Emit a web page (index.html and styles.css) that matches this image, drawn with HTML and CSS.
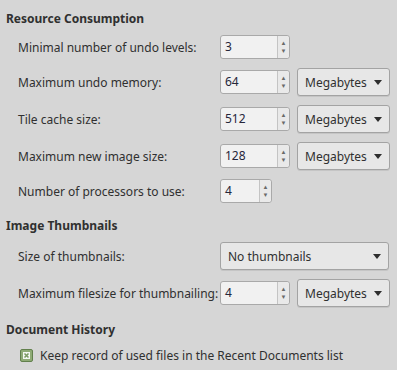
FILE: index.html
```html
<!DOCTYPE html>
<html lang="en">
<head>
    <meta charset="UTF-8">
    <title>Environment Settings</title>
    <link rel="stylesheet" href="styles.css">
</head>
<body>
    <div class="panel">
        <div class="section-title">Resource Consumption</div>
        <div class="row row-first short">
            <label>Minimal number of undo levels:</label>
            <div class="spin"><span class="value">3</span><span class="arrows"><i>&#9650;</i><i>&#9660;</i></span></div>
        </div>
        <div class="row">
            <label>Maximum undo memory:</label>
            <div class="spin"><span class="value">64</span><span class="arrows"><i>&#9650;</i><i>&#9660;</i></span></div>
            <div class="combo"><span>Megabytes</span><svg class="caret" width="8" height="5" viewBox="0 0 8 5"><path d="M0 0 H8 L4 5 Z"/></svg></div>
        </div>
        <div class="row">
            <label>Tile cache size:</label>
            <div class="spin"><span class="value">512</span><span class="arrows"><i>&#9650;</i><i>&#9660;</i></span></div>
            <div class="combo"><span>Megabytes</span><svg class="caret" width="8" height="5" viewBox="0 0 8 5"><path d="M0 0 H8 L4 5 Z"/></svg></div>
        </div>
        <div class="row">
            <label>Maximum new image size:</label>
            <div class="spin"><span class="value">128</span><span class="arrows"><i>&#9650;</i><i>&#9660;</i></span></div>
            <div class="combo"><span>Megabytes</span><svg class="caret" width="8" height="5" viewBox="0 0 8 5"><path d="M0 0 H8 L4 5 Z"/></svg></div>
        </div>
        <div class="row short">
            <label>Number of processors to use:</label>
            <div class="spin spin-small"><span class="value">4</span><span class="arrows"><i>&#9650;</i><i>&#9660;</i></span></div>
        </div>

        <div class="section-title section-gap">Image Thumbnails</div>
        <div class="row row-first">
            <label>Size of thumbnails:</label>
            <div class="combo combo-wide"><span>No thumbnails</span><svg class="caret" width="8" height="5" viewBox="0 0 8 5"><path d="M0 0 H8 L4 5 Z"/></svg></div>
        </div>
        <div class="row">
            <label>Maximum filesize for thumbnailing:</label>
            <div class="spin"><span class="value">4</span><span class="arrows"><i>&#9650;</i><i>&#9660;</i></span></div>
            <div class="combo"><span>Megabytes</span><svg class="caret" width="8" height="5" viewBox="0 0 8 5"><path d="M0 0 H8 L4 5 Z"/></svg></div>
        </div>

        <div class="section-title section-gap">Document History</div>
        <div class="check-row">
            <svg class="check" width="13" height="13" viewBox="0 0 13 13">
                <rect x="0.5" y="0.5" width="12" height="12" rx="1.5" fill="#8fab76" stroke="#62804d"/>
                <rect x="3" y="3" width="7" height="7" fill="#f4f7f1"/>
                <path d="M4.5 4.5 L8.5 8.5 M8.5 4.5 L4.5 8.5" stroke="#7b9a63" stroke-width="1.6"/>
            </svg>
            <span>Keep record of used files in the Recent Documents list</span>
        </div>
    </div>
</body>
</html>
```

FILE: styles.css
```css
body {
    margin: 0;
    font-family: "Noto Sans", "Open Sans", sans-serif;
    font-size: 12px;
    background-color: #d6d6d6;
    color: #303030;
}
.panel {
    padding: 9px 7px 0 6px;
}
.section-title {
    font-weight: bold;
    height: 20px;
    line-height: 20px;
}
.section-gap {
    margin-top: 13px;
}
.row {
    display: flex;
    align-items: center;
    height: 28px;
    margin-top: 9px;
    padding-left: 12px;
}
.row-first {
    margin-top: 6px;
}
.row.short {
    height: 24px;
}
.row label {
    width: 202px;
    flex-shrink: 0;
    white-space: nowrap;
}
.spin {
    display: flex;
    width: 68px;
    height: 22px;
    border: 1px solid #a9a9a9;
    border-radius: 3px;
    background-color: #f1f1f1;
}
.spin-small {
    width: 50px;
}
.spin .value {
    flex: 1;
    padding-left: 4px;
    line-height: 22px;
    color: #26263a;
}
.spin .arrows {
    width: 11px;
    border-left: 1px solid #c4c4c4;
    background-color: #e9e9e9;
    border-radius: 0 3px 3px 0;
    display: flex;
    flex-direction: column;
    justify-content: center;
    align-items: center;
}
.spin .arrows i {
    font-style: normal;
    font-size: 6px;
    line-height: 8px;
    color: #6a6a6a;
}
.combo {
    display: flex;
    align-items: center;
    justify-content: space-between;
    height: 28px;
    margin-left: 7px;
    padding: 0 7px 0 7px;
    box-sizing: border-box;
    width: 93px;
    border: 1px solid #a3a3a3;
    border-radius: 3px;
    background-color: #e7e7e7;
    box-shadow: 0 1px 0 rgba(0, 0, 0, 0.08);
}
.combo-wide {
    width: 169px;
    margin-left: 0;
}
.caret {
    flex-shrink: 0;
    fill: #2e2e2e;
}
.check-row {
    display: flex;
    align-items: center;
    height: 20px;
    margin-top: 5px;
    padding-left: 14px;
}
.check {
    margin-right: 7px;
}
```
